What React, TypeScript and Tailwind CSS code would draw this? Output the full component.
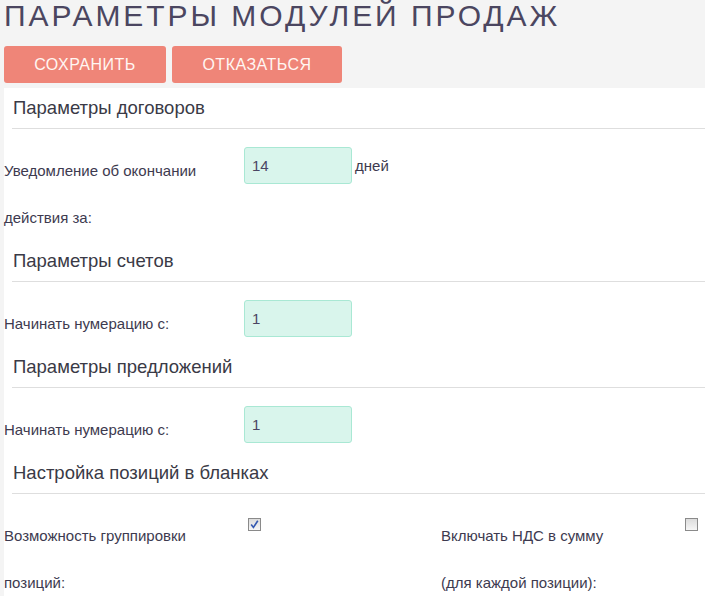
import { FC } from "react";

const Checkbox: FC<{ checked?: boolean }> = ({ checked }) => (
  <span className="mt-[6px] ml-[4px] flex h-[13px] w-[13px] shrink-0 items-center justify-center border border-[#8a8a8a] bg-gradient-to-b from-[#dcdcdc] to-[#f6f6f6]">
    {checked && (
      <svg width="9" height="9" viewBox="0 0 9 9">
        <path d="M1.2 4.6 L3.4 7.4 L7.8 0.8" fill="none" stroke="#3358b0" strokeWidth="1.6" />
      </svg>
    )}
  </span>
);

const Heading: FC<{ title: string }> = ({ title }) => (
  <div className="mb-[18px]">
    <div className="flex h-[40px] items-center pl-[9px] text-[18.5px] text-[#3a3a46]">{title}</div>
    <div className="ml-[8px] h-px bg-[#dedede]" />
  </div>
);

const NumberRow: FC<{ label: React.ReactNode; value: string; unit?: string }> = ({ label, value, unit }) => (
  <div className="flex items-start">
    <div className="w-[240px] text-[15px] leading-[47px] text-[#3d3a4f]">{label}</div>
    <input
      defaultValue={value}
      className="h-[37px] w-[108px] rounded-[3px] border border-[#a9e8d4] bg-[#d9f5ec] px-[7px] text-[15px] text-[#4a4563] outline-none"
    />
    {unit && <span className="pl-[3px] text-[15px] leading-[37px] text-[#3d3a4f]">{unit}</span>}
  </div>
);

export default function App() {
  return (
    <div className="min-h-[596px] overflow-hidden bg-[#f4f4f4] pl-[4px] font-['Liberation_Sans',Arial,sans-serif]">
      <h1 className="h-[46px] text-[30px] leading-[32px] tracking-[2.95px] text-[#4b4660]">
        ПАРАМЕТРЫ МОДУЛЕЙ ПРОДАЖ
      </h1>
      <div className="flex gap-[6px]">
        <button className="h-[37px] w-[162px] rounded-[3px] bg-[#ef8578] text-[16px] tracking-[0.5px] text-[#fff6f2]">
          СОХРАНИТЬ
        </button>
        <button className="h-[37px] w-[170px] rounded-[3px] bg-[#ef8578] text-[16px] tracking-[0.5px] text-[#fff6f2]">
          ОТКАЗАТЬСЯ
        </button>
      </div>
      <div className="mt-[5px] bg-white">
        <Heading title="Параметры договоров" />
        <NumberRow
          label={
            <>
              Уведомление об окончании
              <br />
              действия за:
            </>
          }
          value="14"
          unit="дней"
        />
        <Heading title="Параметры счетов" />
        <NumberRow label="Начинать нумерацию с:" value="1" />
        <Heading title="Параметры предложений" />
        <NumberRow label="Начинать нумерацию с:" value="1" />
        <Heading title="Настройка позиций в бланках" />
        <div className="flex">
          <div className="flex w-[437px] items-start">
            <div className="w-[240px] text-[15px] leading-[47px] text-[#3d3a4f]">
              Возможность группировки
              <br />
              позиций:
            </div>
            <Checkbox checked />
          </div>
          <div className="flex items-start">
            <div className="w-[240px] text-[15px] leading-[47px] text-[#3d3a4f]">
              Включать НДС в сумму
              <br />
              (для каждой позиции):
            </div>
            <Checkbox />
          </div>
        </div>
      </div>
    </div>
  );
}
